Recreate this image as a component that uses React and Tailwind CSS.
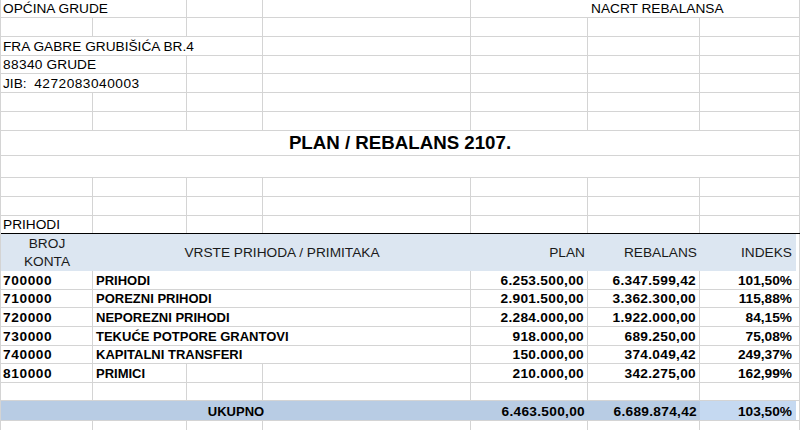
const GRID = 'grid grid-cols-[92px_94px_76px_208px_117px_112px_96px_4px]';
const LINE = 'border-r border-[#d4d4d4]';

const rows = [
  { code: '700000', name: 'PRIHODI', plan: '6.253.500,00', reb: '6.347.599,42', idx: '101,50%', h: 'h-[19px]' },
  { code: '710000', name: 'POREZNI PRIHODI', plan: '2.901.500,00', reb: '3.362.300,00', idx: '115,88%', h: 'h-[18px]' },
  { code: '720000', name: 'NEPOREZNI PRIHODI', plan: '2.284.000,00', reb: '1.922.000,00', idx: '84,15%', h: 'h-[19px]' },
  { code: '730000', name: 'TEKUĆE POTPORE GRANTOVI', plan: '918.000,00', reb: '689.250,00', idx: '75,08%', h: 'h-[19px]' },
  { code: '740000', name: 'KAPITALNI TRANSFERI', plan: '150.000,00', reb: '374.049,42', idx: '249,37%', h: 'h-[18px]' },
];

function Row({ h, last, children, bottom = 'border-b border-[#d4d4d4]' }) {
  return <div className={`${GRID} ${h} ${last ? '' : bottom}`}>{children}</div>;
}

function C({ span = '', line = true, className = '', children }) {
  return (
    <div className={`${span} ${line ? LINE : ''} flex items-end whitespace-nowrap ${className}`}>
      {children}
    </div>
  );
}

function Empty({ h, last, bottom }) {
  return (
    <Row h={h} last={last} bottom={bottom}>
      <C /><C /><C /><C /><C /><C /><C line={false} /><C />
    </Row>
  );
}

export default function App() {
  return (
    <div className="w-[800px] h-[430px] overflow-hidden bg-white text-black font-['Liberation_Sans',Arial,sans-serif] text-[13.7px] leading-[16px]">
      <div className="border-l border-[#d4d4d4]">
        <Row h="h-[18px]">
          <C span="col-span-2" className="pl-[2px]">OPĆINA GRUDE</C>
          <C /><C />
          <C line={false} />
          <C span="col-span-2" line={false} className="pl-[3px]">NACRT REBALANSA</C>
          <C />
        </Row>
        <Empty h="h-[19px]" />
        <Row h="h-[19px]">
          <C span="col-span-3" className="pl-[2px]">FRA GABRE GRUBIŠIĆA BR.4</C>
          <C /><C /><C /><C line={false} /><C />
        </Row>
        <Row h="h-[18px]">
          <C span="col-span-2" className="pl-[2px]"><span className="tracking-[0.35px]">88340</span>&nbsp;GRUDE</C>
          <C /><C /><C /><C /><C line={false} /><C />
        </Row>
        <Row h="h-[19px]">
          <C span="col-span-2" className="pl-[2px] whitespace-pre">JIB:  <span className="tracking-[0.5px]">4272083040003</span></C>
          <C /><C /><C /><C /><C line={false} /><C />
        </Row>
        <Empty h="h-[19px]" />
        <Empty h="h-[19px]" />
        <Row h="h-[25px]">
          <C span="col-span-8" className="!items-center justify-center font-bold text-[18.7px] leading-[21px] pb-[2px]">
            PLAN / REBALANS 2107.
          </C>
        </Row>
        <Row h="h-[22px]">
          <C span="col-span-8" />
        </Row>
        <Empty h="h-[19px]" />
        <Empty h="h-[19px]" />
        <Row h="h-[18px]" bottom="border-b border-black">
          <C className="pl-[2px]">PRIHODI</C>
          <C /><C /><C /><C /><C /><C line={false} /><C />
        </Row>
        <Row h="h-[37px]" last>
          <div className="bg-[#dce6f1] flex flex-col items-center justify-center leading-[18px] text-[#1a1a1a]">
            <span>BROJ</span>
            <span>KONTA</span>
          </div>
          <div className="col-span-3 bg-[#dce6f1] flex items-center justify-center text-[#1a1a1a]">
            VRSTE PRIHODA / PRIMITAKA
          </div>
          <div className="bg-[#dce6f1] flex items-center justify-end pr-[3px] text-[#1a1a1a]">PLAN</div>
          <div className="bg-[#dce6f1] flex items-center justify-end pr-[3px] text-[#1a1a1a]">REBALANS</div>
          <div className="bg-[#dce6f1] flex items-center justify-end pr-[4px] text-[#1a1a1a]">INDEKS</div>
          <div className={LINE} />
        </Row>
        {rows.map((r) => (
          <Row key={r.code} h={r.h}>
            <C className="pl-[2px] font-bold tracking-[0.6px]">{r.code}</C>
            <C span="col-span-3" className="pl-[3px] font-bold text-[13px]">{r.name}</C>
            <C className="justify-end pr-[3px] font-bold tracking-[0.3px]">{r.plan}</C>
            <C className="justify-end pr-[3px] font-bold tracking-[0.3px]">{r.reb}</C>
            <C line={false} className="justify-end pr-[4px] font-bold">{r.idx}</C>
            <C />
          </Row>
        ))}
        <Row h="h-[19px]">
          <C className="pl-[2px] font-bold tracking-[0.6px]">810000</C>
          <C className="pl-[3px] font-bold text-[13px]">PRIMICI</C>
          <C /><C />
          <C className="justify-end pr-[3px] font-bold tracking-[0.3px]">210.000,00</C>
          <C className="justify-end pr-[3px] font-bold tracking-[0.3px]">342.275,00</C>
          <C line={false} className="justify-end pr-[4px] font-bold">162,99%</C>
          <C />
        </Row>
        <Empty h="h-[18px]" />
        <Row h="h-[20px]">
          <div className="col-span-4 bg-[#b8cce4] flex items-end justify-center font-bold text-[13px]">UKUPNO</div>
          <div className="bg-[#b8cce4] flex items-end justify-end pr-[3px] font-bold tracking-[0.3px]">6.463.500,00</div>
          <div className="bg-[#b8cce4] flex items-end justify-end pr-[3px] font-bold tracking-[0.3px]">6.689.874,42</div>
          <div className="bg-[#c5d9f1] flex items-end justify-end pr-[4px] font-bold">103,50%</div>
          <div className={LINE} />
        </Row>
        <Empty h="h-[12px]" last />
      </div>
    </div>
  );
}
